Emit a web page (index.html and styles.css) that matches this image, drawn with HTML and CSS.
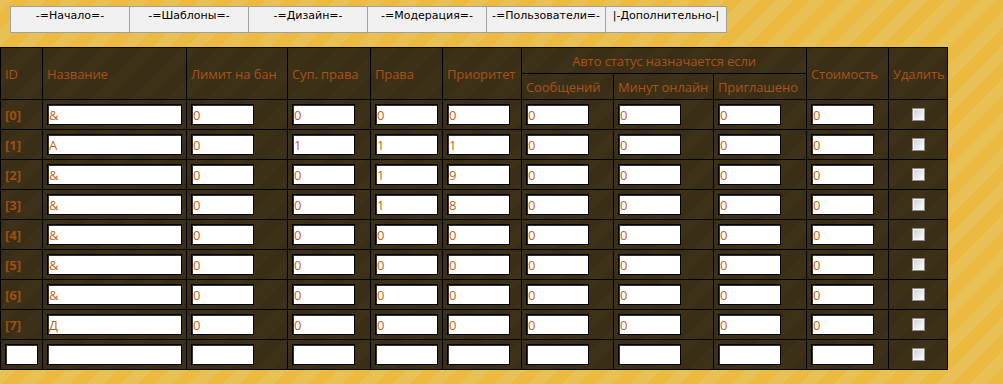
FILE: index.html
```html
<!DOCTYPE html>
<html lang="ru">
<head>
<meta charset="UTF-8">
<title>Статусы</title>
<link rel="stylesheet" href="styles.css">
</head>
<body>
<div class="menu">
  <div class="menu-item">-=Начало=-</div>
  <div class="menu-item">-=Шаблоны=-</div>
  <div class="menu-item">-=Дизайн=-</div>
  <div class="menu-item">-=Модерация=-</div>
  <div class="menu-item">-=Пользователи=-</div>
  <div class="menu-item menu-last">|-Дополнительно-|</div>
</div>

<form class="status-form">
<table class="status-table">
  <colgroup>
    <col class="c-id"><col class="c-name"><col class="c-ban"><col class="c-sup"><col class="c-rights">
    <col class="c-prio"><col class="c-msg"><col class="c-min"><col class="c-inv"><col class="c-cost"><col class="c-del">
  </colgroup>
  <tr class="head-row">
    <th rowspan="2">ID</th>
    <th rowspan="2">Название</th>
    <th rowspan="2">Лимит на бан</th>
    <th rowspan="2">Суп. права</th>
    <th rowspan="2">Права</th>
    <th rowspan="2">Приоритет</th>
    <th colspan="3" class="center">Авто статус назначается если</th>
    <th rowspan="2">Стоимость</th>
    <th rowspan="2">Удалить</th>
  </tr>
  <tr class="head-row">
    <th>Сообщений</th>
    <th>Минут онлайн</th>
    <th>Приглашено</th>
  </tr>
  <tr>
    <td class="id">[0]</td>
    <td><input class="wide" type="text" value="&amp;"></td>
    <td><input type="text" value="0"></td><td><input type="text" value="0"></td><td><input type="text" value="0"></td>
    <td><input type="text" value="0"></td><td><input type="text" value="0"></td><td><input type="text" value="0"></td>
    <td><input type="text" value="0"></td><td><input type="text" value="0"></td>
    <td class="center"><input class="check" type="checkbox"></td>
  </tr>
  <tr>
    <td class="id">[1]</td>
    <td><input class="wide" type="text" value="А"></td>
    <td><input type="text" value="0"></td><td><input type="text" value="1"></td><td><input type="text" value="1"></td>
    <td><input type="text" value="1"></td><td><input type="text" value="0"></td><td><input type="text" value="0"></td>
    <td><input type="text" value="0"></td><td><input type="text" value="0"></td>
    <td class="center"><input class="check" type="checkbox"></td>
  </tr>
  <tr>
    <td class="id">[2]</td>
    <td><input class="wide" type="text" value="&amp;"></td>
    <td><input type="text" value="0"></td><td><input type="text" value="0"></td><td><input type="text" value="1"></td>
    <td><input type="text" value="9"></td><td><input type="text" value="0"></td><td><input type="text" value="0"></td>
    <td><input type="text" value="0"></td><td><input type="text" value="0"></td>
    <td class="center"><input class="check" type="checkbox"></td>
  </tr>
  <tr>
    <td class="id">[3]</td>
    <td><input class="wide" type="text" value="&amp;"></td>
    <td><input type="text" value="0"></td><td><input type="text" value="0"></td><td><input type="text" value="1"></td>
    <td><input type="text" value="8"></td><td><input type="text" value="0"></td><td><input type="text" value="0"></td>
    <td><input type="text" value="0"></td><td><input type="text" value="0"></td>
    <td class="center"><input class="check" type="checkbox"></td>
  </tr>
  <tr>
    <td class="id">[4]</td>
    <td><input class="wide" type="text" value="&amp;"></td>
    <td><input type="text" value="0"></td><td><input type="text" value="0"></td><td><input type="text" value="0"></td>
    <td><input type="text" value="0"></td><td><input type="text" value="0"></td><td><input type="text" value="0"></td>
    <td><input type="text" value="0"></td><td><input type="text" value="0"></td>
    <td class="center"><input class="check" type="checkbox"></td>
  </tr>
  <tr>
    <td class="id">[5]</td>
    <td><input class="wide" type="text" value="&amp;"></td>
    <td><input type="text" value="0"></td><td><input type="text" value="0"></td><td><input type="text" value="0"></td>
    <td><input type="text" value="0"></td><td><input type="text" value="0"></td><td><input type="text" value="0"></td>
    <td><input type="text" value="0"></td><td><input type="text" value="0"></td>
    <td class="center"><input class="check" type="checkbox"></td>
  </tr>
  <tr>
    <td class="id">[6]</td>
    <td><input class="wide" type="text" value="&amp;"></td>
    <td><input type="text" value="0"></td><td><input type="text" value="0"></td><td><input type="text" value="0"></td>
    <td><input type="text" value="0"></td><td><input type="text" value="0"></td><td><input type="text" value="0"></td>
    <td><input type="text" value="0"></td><td><input type="text" value="0"></td>
    <td class="center"><input class="check" type="checkbox"></td>
  </tr>
  <tr>
    <td class="id">[7]</td>
    <td><input class="wide" type="text" value="Д"></td>
    <td><input type="text" value="0"></td><td><input type="text" value="0"></td><td><input type="text" value="0"></td>
    <td><input type="text" value="0"></td><td><input type="text" value="0"></td><td><input type="text" value="0"></td>
    <td><input type="text" value="0"></td><td><input type="text" value="0"></td>
    <td class="center"><input class="check" type="checkbox"></td>
  </tr>
  <tr>
    <td><input class="small" type="text"></td>
    <td><input class="wide" type="text"></td>
    <td><input type="text"></td><td><input type="text"></td><td><input type="text"></td>
    <td><input type="text"></td><td><input type="text"></td><td><input type="text"></td>
    <td><input type="text"></td><td><input type="text"></td>
    <td class="center"><input class="check" type="checkbox"></td>
  </tr>
</table>
</form>
</body>
</html>
```
FILE: styles.css
```css
html, body {
  margin: 0;
  height: 100%;
}
body {
  padding-top: 6px;
  box-sizing: border-box;
  background: repeating-linear-gradient(-45deg, #ecb941 0, #ecb941 12px, #e8c053 12px, #e8c053 24px);
  font-family: "Open Sans", sans-serif;
}
.menu {
  display: flex;
  margin: 0 0 0 10px;
  width: 717px;
  height: 27px;
  box-sizing: border-box;
  border: 1px solid #a0a0a0;
  background: #f0f0f0;
}
.menu-item {
  width: 119px;
  box-sizing: border-box;
  border-right: 1px solid #a0a0a0;
  padding-top: 2px;
  text-align: center;
  font-family: "DejaVu Sans", Verdana, sans-serif;
  font-size: 11px;
  line-height: 13px;
  color: #000;
}
.menu-last {
  width: 120px;
  border-right: none;
}
.status-form {
  margin: 14px 0 0 0;
}
.status-table {
  border-collapse: collapse;
  table-layout: fixed;
  width: 948px;
  background: repeating-linear-gradient(-45deg, #3d3118 0, #3d3118 14px, #3a2e16 14px, #3a2e16 28px);
  border: 1px solid #000;
}
.c-id { width: 42px; }
.c-name { width: 144px; }
.c-ban { width: 101px; }
.c-sup { width: 83px; }
.c-rights { width: 72px; }
.c-prio { width: 79px; }
.c-msg { width: 92px; }
.c-min { width: 100px; }
.c-inv { width: 93px; }
.c-cost { width: 82px; }
.c-del { width: 59px; }
th, td {
  border: 1px solid #000;
  padding: 0 0 0 4px;
  white-space: nowrap;
}
th {
  height: 25px;
  text-align: left;
  font-weight: normal;
  font-size: 13px;
  letter-spacing: -0.1px;
  color: #a8531a;
}
td {
  height: 29px;
}
.center {
  text-align: center;
  padding: 0;
}
.id {
  font-size: 13px;
  font-weight: bold;
  color: #a04e12;
}
input[type="text"] {
  display: block;
  width: 63px;
  height: 21px;
  box-sizing: border-box;
  margin: 0;
  padding: 0 0 0 1px;
  border: 1px solid #000;
  box-shadow: inset 1px 1px 0 #333;
  background: #fff;
  font-family: "Open Sans", sans-serif;
  font-size: 13px;
  color: #c65f12;
}
input.wide {
  width: 135px;
}
input.small {
  width: 33px;
}
.check {
  appearance: none;
  display: block;
  margin: 0 auto;
  width: 13px;
  height: 13px;
  border: 1px solid #8c8c8c;
  box-shadow: inset 0 0 0 1px #f4f4f4;
  background: linear-gradient(135deg, #cfcfcf, #ffffff);
}
```
